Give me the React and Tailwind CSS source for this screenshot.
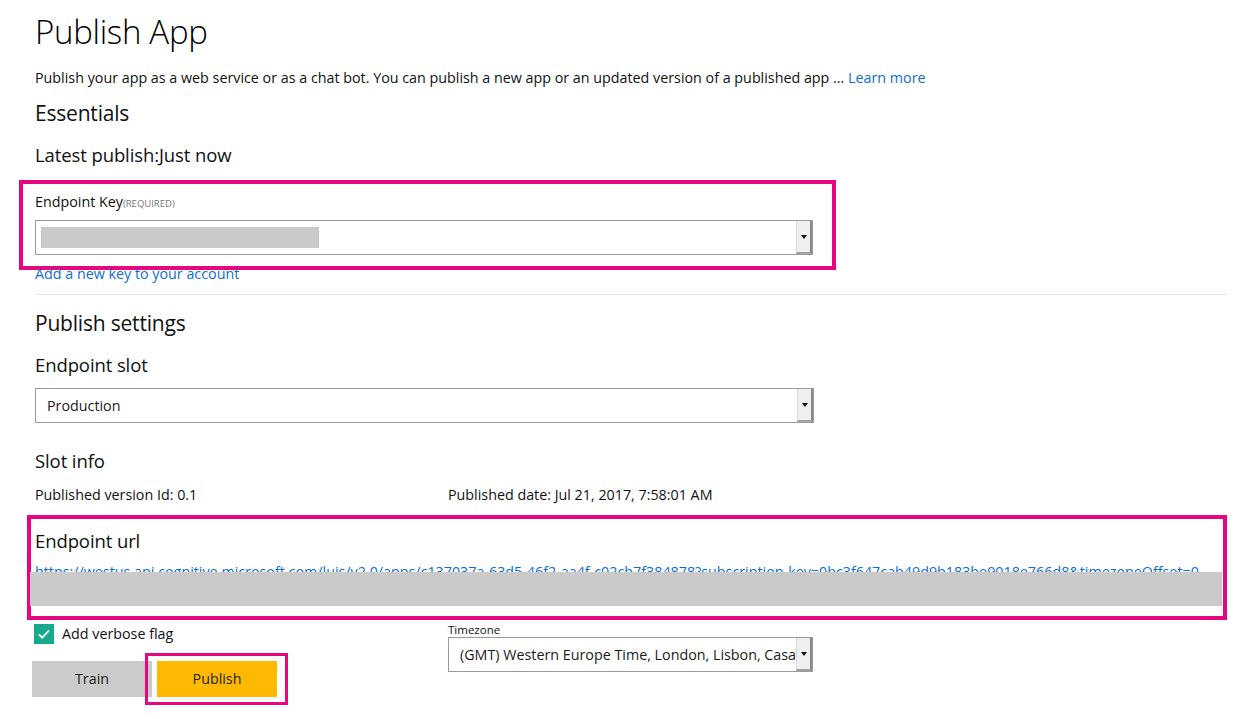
import React from "react";

function Select({ children, className = "" }) {
  return (
    <div className={`relative flex h-[35px] items-stretch border border-[#9a9a9a] bg-white ${className}`}>
      <div className="flex flex-1 items-center overflow-hidden whitespace-nowrap pl-[11px] text-[14.3px] text-[#1a1a1a]">{children}</div>
      <div className="flex w-[16px] items-center justify-center border-l border-[#d8d8d8] border-r-2 border-r-[#8a8a8a] border-b-2 border-b-[#a0a0a0] bg-[#efefef]">
        <svg width="6" height="4" viewBox="0 0 6 4"><path d="M0 0h6L3 4z" fill="#111" /></svg>
      </div>
    </div>
  );
}

export default function App() {
  const font = { fontFamily: '"Open Sans", "Noto Sans", sans-serif' };
  return (
    <div className="min-h-[719px] w-[1257px] bg-white pl-[35px] pr-[30px] text-[#111]" style={font}>
      <h1 className="pt-[10px] text-[33px] font-light leading-[44px] tracking-[-0.3px] text-black">Publish App</h1>
      <p className="mt-[14px] text-[14.3px] leading-[20px]">
        Publish your app as a web service or as a chat bot. You can publish a new app or an updated version of a published app ...{" "}
        <a className="text-[#0f6cd4]">Learn more</a>
      </p>
      <h2 className="mt-[9px] text-[21px] leading-[32px] tracking-[-0.2px]">Essentials</h2>
      <div className="mt-[12px] text-[18.5px] leading-[28px] tracking-[-0.1px]">Latest publish:Just now</div>

      <div className="-ml-[16px] mt-[11px] w-[817px] border-4 border-[#e6067f] pl-[12px] pr-[19px] pt-[8px] pb-[11px]">
        <div className="text-[14.3px] leading-[20px]">
          Endpoint Key<span className="text-[9.5px] uppercase text-[#777]">(required)</span>
        </div>
        <div className="relative mt-[6px]">
          <Select>
            <span />
          </Select>
          <div className="absolute left-[6px] top-[7px] h-[21px] w-[278px] bg-[#cacaca]" />
        </div>
      </div>
      <a className="-mt-[6px] block text-[14.3px] leading-[20px] text-[#0f6cd4]">Add a new key to your account</a>
      <div className="mt-[10px] h-px bg-[#e4e4e4]" />

      <h2 className="mt-[12px] text-[21px] leading-[32px] tracking-[-0.2px]">Publish settings</h2>
      <div className="mt-[12px] text-[18.5px] leading-[28px] tracking-[-0.1px]">Endpoint slot</div>
      <Select className="mt-[9px] w-[779px]">Production</Select>
      <div className="mt-[24px] text-[18.5px] leading-[28px] tracking-[-0.1px]">Slot info</div>
      <div className="mt-[10px] flex text-[14.3px] leading-[20px]">
        <div className="w-[413px]">Published version Id: 0.1</div>
        <div>Published date: Jul 21, 2017, 7:58:01 AM</div>
      </div>

      <div className="relative -ml-[8px] mt-[10px] h-[105px] w-[1200px] border-4 border-[#e6067f] pl-[4px] pt-[8px]">
        <div className="text-[18.5px] leading-[28px] tracking-[-0.1px]">Endpoint url</div>
        <div className="mt-[7px] overflow-hidden whitespace-nowrap text-[14.3px] leading-[20px] text-[#0f6cd4]">
          https://westus.api.cognitive.microsoft.com/luis/v2.0/apps/c137037a-63d5-46f2-aa4f-c02cb7f384878?subscription-key=0bc3f647cab49d9b183be9018e766d8&amp;timezoneOffset=0
        </div>
        <div className="absolute left-[-1px] top-[53px] h-[34px] w-[1192px] bg-[#cacaca]" />
      </div>

      <div className="flex">
        <div className="w-[413px]">
          <label className="-ml-[1px] mt-[4px] flex h-[20px] items-center gap-[8px] text-[14.3px]">
            <span className="flex h-[20px] w-[20px] items-center justify-center bg-[#17a98b]">
              <svg width="14" height="14" viewBox="0 0 14 14"><path d="M2 7.5l3.2 3.2L12 3.5" fill="none" stroke="white" strokeWidth="1.8" /></svg>
            </span>
            Add verbose flag
          </label>
          <div className="-ml-[3px] mt-[17px] flex gap-[5px]">
            <button className="h-[36px] w-[120px] bg-[#cbcbcb] text-[14.3px] text-[#222]">Train</button>
            <div className="relative">
              <button className="h-[36px] w-[120px] bg-[#ffb900] text-[14.3px] text-[#222]">Publish</button>
              <div className="pointer-events-none absolute -left-[12px] -top-[8px] h-[52px] w-[143px] border-[3px] border-[#e6067f]" />
            </div>
          </div>
        </div>
        <div className="mt-[3px]">
          <div className="text-[11.5px] leading-[14px]">Timezone</div>
          <Select className="w-[365px]">(GMT) Western Europe Time, London, Lisbon, Casablanca</Select>
        </div>
      </div>
    </div>
  );
}
